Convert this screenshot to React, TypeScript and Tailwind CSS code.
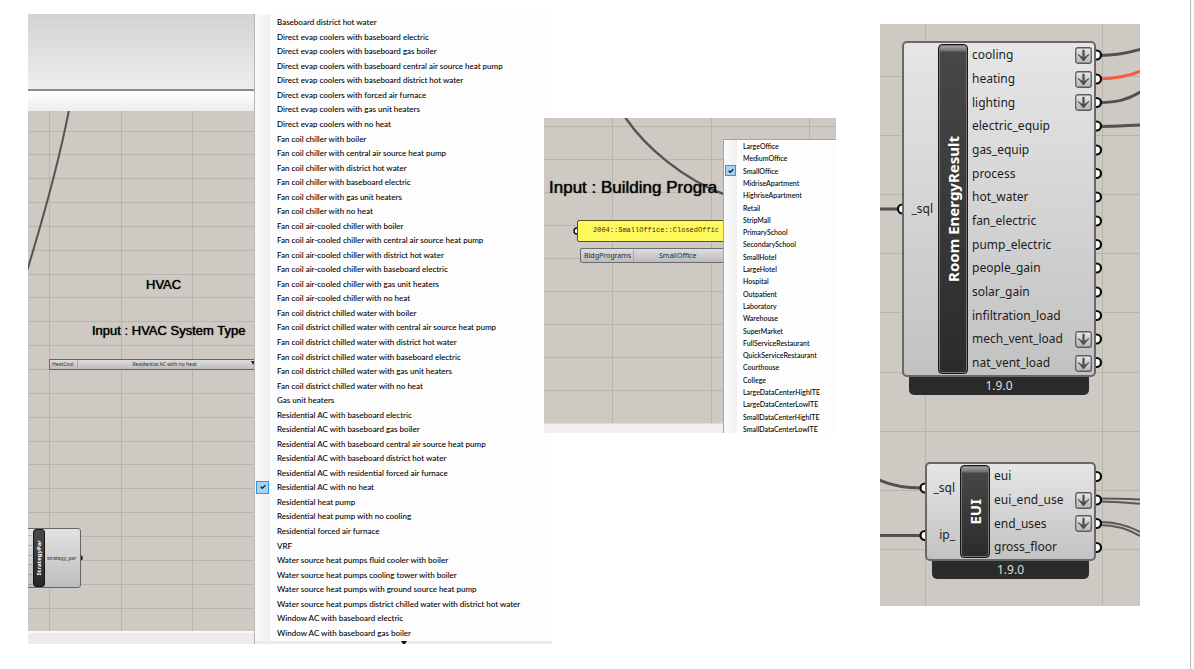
import React from "react";

const hvacSystems = [
  "Baseboard district hot water",
  "Direct evap coolers with baseboard electric",
  "Direct evap coolers with baseboard gas boiler",
  "Direct evap coolers with baseboard central air source heat pump",
  "Direct evap coolers with baseboard district hot water",
  "Direct evap coolers with forced air furnace",
  "Direct evap coolers with gas unit heaters",
  "Direct evap coolers with no heat",
  "Fan coil chiller with boiler",
  "Fan coil chiller with central air source heat pump",
  "Fan coil chiller with district hot water",
  "Fan coil chiller with baseboard electric",
  "Fan coil chiller with gas unit heaters",
  "Fan coil chiller with no heat",
  "Fan coil air-cooled chiller with boiler",
  "Fan coil air-cooled chiller with central air source heat pump",
  "Fan coil air-cooled chiller with district hot water",
  "Fan coil air-cooled chiller with baseboard electric",
  "Fan coil air-cooled chiller with gas unit heaters",
  "Fan coil air-cooled chiller with no heat",
  "Fan coil district chilled water with boiler",
  "Fan coil district chilled water with central air source heat pump",
  "Fan coil district chilled water with district hot water",
  "Fan coil district chilled water with baseboard electric",
  "Fan coil district chilled water with gas unit heaters",
  "Fan coil district chilled water with no heat",
  "Gas unit heaters",
  "Residential AC with baseboard electric",
  "Residential AC with baseboard gas boiler",
  "Residential AC with baseboard central air source heat pump",
  "Residential AC with baseboard district hot water",
  "Residential AC with residential forced air furnace",
  "Residential AC with no heat",
  "Residential heat pump",
  "Residential heat pump with no cooling",
  "Residential forced air furnace",
  "VRF",
  "Water source heat pumps fluid cooler with boiler",
  "Water source heat pumps cooling tower with boiler",
  "Water source heat pumps with ground source heat pump",
  "Water source heat pumps district chilled water with district hot water",
  "Window AC with baseboard electric",
  "Window AC with baseboard gas boiler",
];

const buildingPrograms = [
  "LargeOffice",
  "MediumOffice",
  "SmallOffice",
  "MidriseApartment",
  "HighriseApartment",
  "Retail",
  "StripMall",
  "PrimarySchool",
  "SecondarySchool",
  "SmallHotel",
  "LargeHotel",
  "Hospital",
  "Outpatient",
  "Laboratory",
  "Warehouse",
  "SuperMarket",
  "FullServiceRestaurant",
  "QuickServiceRestaurant",
  "Courthouse",
  "College",
  "LargeDataCenterHighITE",
  "LargeDataCenterLowITE",
  "SmallDataCenterHighITE",
  "SmallDataCenterLowITE",
];

type Output = { name: string; graft?: boolean };

const energyOutputs: Output[] = [
  { name: "cooling", graft: true },
  { name: "heating", graft: true },
  { name: "lighting", graft: true },
  { name: "electric_equip" },
  { name: "gas_equip" },
  { name: "process" },
  { name: "hot_water" },
  { name: "fan_electric" },
  { name: "pump_electric" },
  { name: "people_gain" },
  { name: "solar_gain" },
  { name: "infiltration_load" },
  { name: "mech_vent_load", graft: true },
  { name: "nat_vent_load", graft: true },
];

const euiOutputs: Output[] = [
  { name: "eui" },
  { name: "eui_end_use", graft: true },
  { name: "end_uses", graft: true },
  { name: "gross_floor" },
];

function GridLines({ xs, y0, step, count }: { xs: number[]; y0: number; step: number; count: number }) {
  return (
    <g stroke="#b9b4ac" strokeWidth="1">
      {xs.map((x) => (
        <line key={x} x1={x} x2={x} y1="0" y2="1000" />
      ))}
      {Array.from({ length: count }, (_, i) => Math.floor(y0 + i * step) + 0.5).map((y) => (
        <line key={y} x1="0" x2="1000" y1={y} y2={y} />
      ))}
    </g>
  );
}

function Ports({ points, r }: { points: [number, number][]; r: number }) {
  return (
    <g fill="#ffffff" stroke="#0a0a0a" strokeWidth={r > 3 ? 2.2 : 1.4}>
      {points.map(([x, y]) => (
        <circle key={`${x}-${y}`} cx={x} cy={y} r={r} />
      ))}
    </g>
  );
}

function CheckMark({ className }: { className: string }) {
  return (
    <span className={`flex items-center justify-center border border-[#2f97e0] bg-[#a6d2f3] ${className}`}>
      <svg viewBox="0 0 8 8" className="size-2" fill="none" stroke="#14212e" strokeWidth="1.3" aria-hidden="true">
        <path d="M1.6 3.7 3.2 5.3 6.4 2.3" />
      </svg>
    </span>
  );
}

function GraftIcon() {
  return (
    <svg viewBox="0 0 17 17" className="size-[17px] shrink-0" fill="none" aria-hidden="true">
      <rect x="0.75" y="0.75" width="15.5" height="15.5" rx="2" fill="url(#graftFill)" stroke="#5c5c5c" strokeWidth="1.3" />
      <path d="M8.5 2.8v9" stroke="#4c4c4c" strokeWidth="2.2" />
      <path d="M3 7.3 8.5 14 14 7.3 8.5 11.2Z" fill="#4c4c4c" stroke="#4c4c4c" strokeWidth="0.8" />
    </svg>
  );
}

function Plate({ children, className }: { children: React.ReactNode; className: string }) {
  return (
    <div
      className={`flex items-center justify-center border border-[#161616] font-bold text-white ${className}`}
    >
      <span className="rotate-180 whitespace-nowrap [writing-mode:vertical-rl]">{children}</span>
    </div>
  );
}

function Component({
  name,
  inputs,
  outputs,
  className,
  inputsClass,
}: {
  name: string;
  inputs: string[];
  outputs: Output[];
  className: string;
  inputsClass: string;
}) {
  return (
    <section aria-label={name} className={`absolute text-xs leading-4 text-[#1c1c1c] ${className}`}>
      <div className="flex rounded-[5px] border-2 border-[#686868] bg-linear-to-b from-[#e6e6e6] to-[#c2c2c2]">
        <ul className={`flex flex-col justify-around pr-[5px] text-right ${inputsClass}`}>
          {inputs.map((input) => (
            <li key={input}>{input}</li>
          ))}
        </ul>
        <Plate className="my-px w-[30px] rounded-[4px] bg-[linear-gradient(#ababab_0,#6e6e6e_6px,#474747_7px,#2b2b2b_100%)] text-[15px] shadow-[inset_0_0_0_1px_#777]">
          {name}
        </Plate>
        <ul className="flex flex-1 flex-col pr-0.5 pl-1">
          {outputs.map((output) => (
            <li key={output.name} className="flex h-6 items-center justify-between [&:nth-child(3n)]:h-[23px]">
              {output.name}
              {output.graft && <GraftIcon />}
            </li>
          ))}
        </ul>
      </div>
      <p className="mx-[7px] h-[18px] rounded-b-[5px] bg-[#2b2b2b] text-center leading-[18px] text-[#dedede]">
        1.9.0
      </p>
    </section>
  );
}

function HvacFigure() {
  return (
    <section aria-label="HVAC system type" className="mt-[14px] flex h-[630px] min-w-0 flex-[524_1_0] overflow-hidden">
      <div className="flex w-[226px] shrink-0 flex-col">
        <div className="h-[75px] bg-linear-to-b from-[#d2d2d2] to-[#eeeeee]" />
        <div className="h-[22px] border-t-2 border-[#8a8a8a] bg-linear-to-b from-white to-[#ededed]" />
        <div className="relative flex-1 overflow-hidden bg-[#cec9c2]">
          <svg className="absolute inset-0 size-full" aria-hidden="true">
            <GridLines xs={[21.5, 93.5, 164.5]} y0={20} step={23.85} count={21} />
            <path d="M41 -1C34 35 21 88 -1 160" fill="none" stroke="#56544f" strokeWidth="2" />
            <Ports points={[[52, 447]]} r={2} />
          </svg>
          <h2 className="absolute top-[166px] left-[118px] text-[13px] leading-4 text-black [font-family:'Liberation_Sans',Arial,sans-serif] [text-shadow:0_0_1px_#000]">
            HVAC
          </h2>
          <h3 className="absolute top-[212px] left-16 text-[13px] leading-4 whitespace-nowrap text-black [font-family:'Liberation_Sans',Arial,sans-serif] [text-shadow:0_0_1px_#000]">
            Input : HVAC System Type
          </h3>
          <button
            type="button"
            aria-haspopup="menu"
            className="absolute top-[248px] -right-1 left-[21px] flex h-[11px] items-center border border-[#666] bg-linear-to-b from-[#dedede] to-[#bcbcbc] text-[5px] leading-[9px] text-[#2c2c2c]"
          >
            <span className="w-7 border-r border-[#aaa] pl-0.5 text-left">HeatCool</span>
            <span className="flex-1 text-center">Residential AC with no heat</span>
            <svg viewBox="0 0 4 4" className="mr-0.5 mb-1 size-1" aria-hidden="true">
              <path d="M0 0h4L2 4Z" fill="#222" />
            </svg>
          </button>
          <div className="absolute top-[417px] -left-1 flex h-[60px] w-[57px] rounded-[3px] border border-[#666] bg-linear-to-b from-[#e2e2e2] to-[#bdbdbd] text-[5px] leading-3 text-[#2c2c2c]">
            <ul className="flex w-2 flex-col justify-around pl-1 leading-[9px]">
              {[0, 1, 2, 3, 4, 5].map((i) => (
                <li key={i}>_</li>
              ))}
            </ul>
            <Plate className="w-3 rounded-[3px] bg-linear-to-b from-[#4a4a4a] to-[#262626] text-[6px]">StrategyPar</Plate>
            <span className="flex flex-1 items-center pl-0.5">strategy_par</span>
          </div>
        </div>
        <div className="h-[13px] border-t-2 border-[#fafafa] bg-[#ececec]" />
      </div>
      <div className="flex flex-1 flex-col border-l border-[#b5b5b5] bg-[#fdfdfd]">
        <ul
          role="menu"
          aria-label="HVAC system"
          className="grid h-[627px] auto-rows-fr bg-[linear-gradient(90deg,#fbfbfb_0,#f0f0f0_15px,#fdfdfd_15px)] pt-px pb-px text-[8px] leading-[14px] text-black [font-family:Lato,'Noto_Sans',sans-serif]"
        >
          {hvacSystems.map((item) => {
            const checked = item === "Residential AC with no heat";
            return (
              <li key={item} role="none" className="flex">
                <button
                  type="button"
                  role="menuitemradio"
                  aria-checked={checked}
                  className="flex w-full items-center text-left font-medium whitespace-nowrap"
                >
                  <span className="w-[22px]">{checked && <CheckMark className="ml-px h-[13px] w-[13px]" />}</span>
                  {item}
                </button>
              </li>
            );
          })}
        </ul>
        <div className="flex h-[3px] justify-center bg-[#ececec]">
          <svg viewBox="0 0 6 3" className="h-[3px] w-1.5" aria-hidden="true">
            <path d="M0 0h6L4 3H2Z" fill="#111" />
          </svg>
        </div>
      </div>
    </section>
  );
}

function ProgramFigure() {
  return (
    <section
      aria-label="Building program"
      className="relative mt-[118px] -ml-2 h-[315px] min-w-0 flex-[292_1_0] overflow-hidden bg-[#cec9c2]"
    >
      <svg className="absolute inset-0 size-full" aria-hidden="true">
        <GridLines xs={[68.5, 167.5, 265.5]} y0={8} step={33} count={9} />
        <path d="M81 -1C101 29 140 62 182 77" fill="none" stroke="#56544f" strokeWidth="2.4" />
        <Ports points={[[33, 113]]} r={3} />
      </svg>
      <h2 className="absolute top-[60px] left-[5px] text-[17px] leading-5 whitespace-nowrap text-[#0a0a0a] [font-family:'Liberation_Sans',Arial,sans-serif] [text-shadow:0_0_1px_#000]">
        Input : Building Progra
      </h2>
      <p className="absolute top-[102px] -right-1 left-[33px] h-[22px] rounded-[2px] border border-[#55522c] bg-[#fff95c] pl-[15px] text-[7px] leading-[18px] whitespace-nowrap text-[#33310f] [font-family:'Liberation_Mono','Courier_New',monospace]">
        2004::SmallOffice::ClosedOffic
      </p>
      <button
        type="button"
        aria-haspopup="menu"
        className="absolute top-[130px] -right-1 left-9 flex h-[15px] items-center rounded-[2px] border border-[#6b6b6b] bg-linear-to-b from-[#dedede] to-[#bbbbbb] text-[7px] leading-3 text-[#2a2a2a]"
      >
        <span className="w-[53px] border-r border-[#aaa] pl-[3px] text-left">BldgPrograms</span>
        <span className="pl-[25px]">SmallOffice</span>
      </button>
      <div className="absolute right-0 bottom-0 left-0 h-[10px] border-t border-[#dcdcdc] bg-[#efefef]" />
      <ul
        role="menu"
        aria-label="Building program"
        className="absolute top-[21px] right-0 left-[179px] grid h-[296px] auto-rows-fr border-t border-l border-[#a5a5a5] bg-[linear-gradient(90deg,#fbfbfb_0,#f0f0f0_13px,#fdfdfd_13px)] text-[7px] leading-3 text-black [font-family:Lato,'Noto_Sans',sans-serif]"
      >
        {buildingPrograms.map((item) => {
          const checked = item === "SmallOffice";
          return (
            <li key={item} role="none" className="flex">
              <button
                type="button"
                role="menuitemradio"
                aria-checked={checked}
                className="flex w-full items-center text-left font-medium whitespace-nowrap"
              >
                <span className="w-[19px]">{checked && <CheckMark className="ml-px h-[11px] w-[11px]" />}</span>
                {item}
              </button>
            </li>
          );
        })}
      </ul>
    </section>
  );
}

const outputYs = [31, 55, 78.5, 102, 126, 149.5, 173, 197, 220.5, 244, 268, 291.5, 315, 338.5];

function ResultFigure() {
  return (
    <section
      aria-label="Energy results"
      className="relative mt-6 ml-11 h-[582px] min-w-0 flex-[260_1_0] overflow-hidden bg-[#cec9c2]"
    >
      <svg className="absolute inset-0 size-full" aria-hidden="true">
        <defs>
          <linearGradient id="graftFill" x1="0" y1="0" x2="0" y2="1">
            <stop offset="0" stopColor="#e8e8e8" />
            <stop offset="1" stopColor="#b6b6b6" />
          </linearGradient>
        </defs>
        <GridLines xs={[45.5, 222.5]} y0={52} step={59.2} count={9} />
        <g fill="none" stroke="#52514d" strokeWidth="3">
          <path d="M220 31.5C235 31.5 248 29 262 25" />
          <path d="M220 55C238 54.5 249 52 262 46.5" stroke="#fb5b3c" />
          <path d="M220 78.5C236 78.5 248 76 262 67" />
          <path d="M220 102.5C235 102.5 248 101.5 262 101" />
          <path d="M-1 185H20" />
          <path d="M-1 456C12 462 26 464 42 464" />
          <path d="M-1 511.5H42" />
        </g>
        <g fill="none" stroke="#5a5955" strokeWidth="2">
          <path d="M220 474.5C237 474.5 249 475 262 475.5" />
          <path d="M220 477.5C237 477.5 249 479 262 480" />
          <path d="M220 498C235 498 248 501 262 509" />
          <path d="M220 501C235 501 248 504.5 262 513" />
        </g>
        <Ports points={outputYs.map((y): [number, number] => [216.5, y])} r={4.5} />
        <Ports points={[[216.5, 452.5], [216.5, 476], [216.5, 499.5], [216.5, 523.5]]} r={4.5} />
        <Ports points={[[22.5, 185], [45, 464], [45, 511.5]]} r={4.5} />
      </svg>
      <Component
        name="Room EnergyResult"
        inputs={["_sql"]}
        outputs={energyOutputs}
        className="top-[17px] left-[22px] w-[194px]"
        inputsClass="w-[34px]"
      />
      <Component
        name="EUI"
        inputs={["_sql", "ip_"]}
        outputs={euiOutputs}
        className="top-[438px] left-[45px] w-[171px]"
        inputsClass="w-[33px]"
      />
    </section>
  );
}

export default function App() {
  return (
    <main className="flex min-h-screen items-start bg-white pl-7 [font-family:'Noto_Sans','Open_Sans',sans-serif]">
      <HvacFigure />
      <ProgramFigure />
      <ResultFigure />
      <div className="ml-[50px] w-1 self-stretch border-l border-[#b4bab8] bg-[#fafbfd]" />
    </main>
  );
}
